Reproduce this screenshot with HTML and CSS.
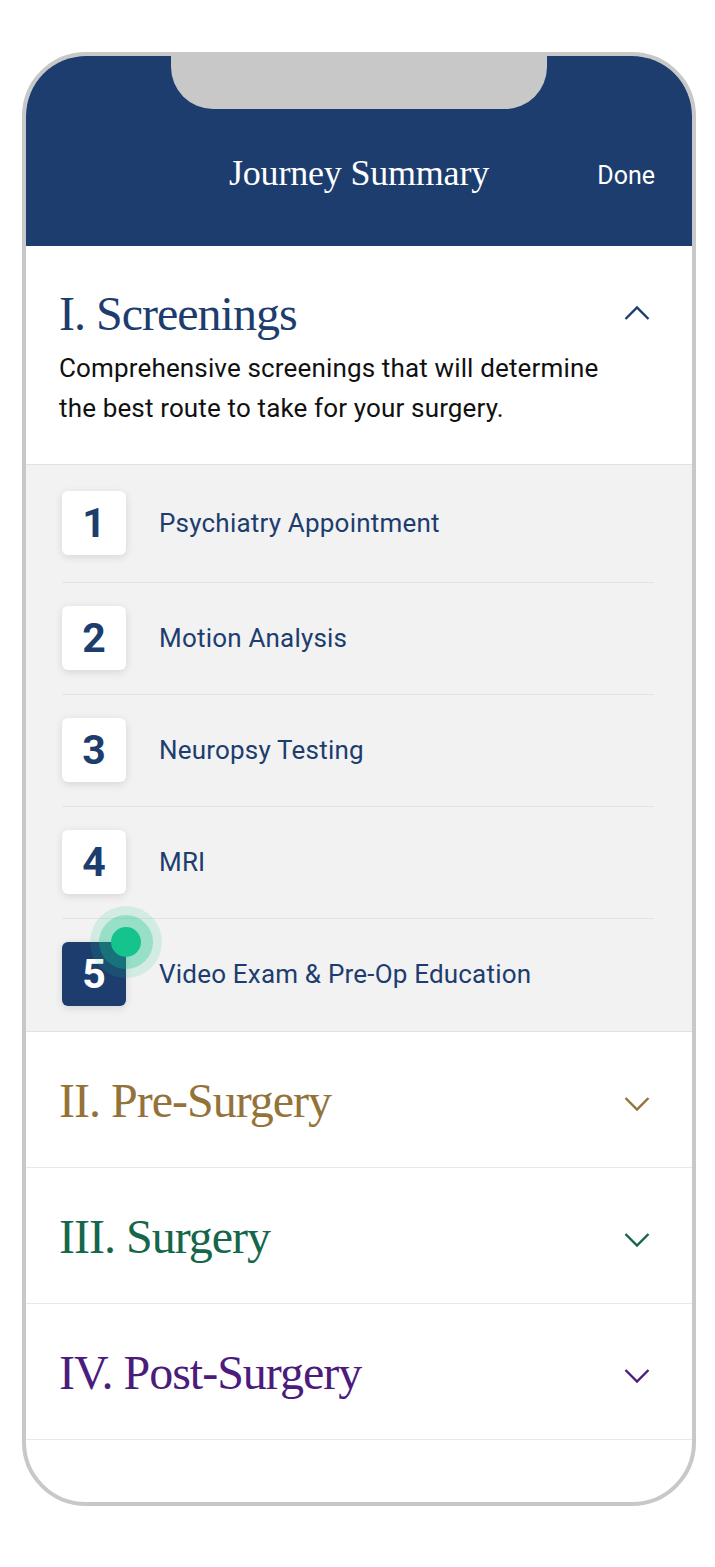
FILE: index.html
```html
<!DOCTYPE html>
<html lang="en">
<head>
<meta charset="utf-8">
<title>Journey Summary</title>
<link rel="stylesheet" href="styles.css">
</head>
<body>
<div class="phone">
  <div class="notch"></div>
  <header class="topbar">
    <span></span>
    <h1 class="topbar-title">Journey Summary</h1>
    <span class="topbar-done">Done</span>
  </header>

  <section class="stage stage-open">
    <div class="stage-head">
      <h2 class="stage-title navy">I. Screenings</h2>
      <svg class="chev chev-up" width="26" height="16" viewBox="0 0 26 16"><polyline points="1.5,14 13,2.5 24.5,14" fill="none" stroke="#1d3d6f" stroke-width="2.4"/></svg>
    </div>
    <p class="stage-desc">Comprehensive screenings that will determine the best route to take for your surgery.</p>
  </section>

  <ul class="steps">
    <li class="step"><span class="step-num">1</span><span class="step-name">Psychiatry Appointment</span></li>
    <li class="step"><span class="step-num">2</span><span class="step-name">Motion Analysis</span></li>
    <li class="step"><span class="step-num">3</span><span class="step-name">Neuropsy Testing</span></li>
    <li class="step"><span class="step-num">4</span><span class="step-name">MRI</span></li>
    <li class="step"><span class="step-num step-num-active">5<span class="pulse"><span class="pulse-mid"></span><span class="pulse-dot"></span></span></span><span class="step-name">Video Exam &amp; Pre-Op Education</span></li>
  </ul>

  <section class="stage">
    <div class="stage-head">
      <h2 class="stage-title gold">II. Pre-Surgery</h2>
      <svg class="chev chev-down" width="26" height="16" viewBox="0 0 26 16"><polyline points="1.5,2 13,13.5 24.5,2" fill="none" stroke="#94733a" stroke-width="2.4"/></svg>
    </div>
  </section>
  <section class="stage">
    <div class="stage-head">
      <h2 class="stage-title green">III. Surgery</h2>
      <svg class="chev chev-down" width="26" height="16" viewBox="0 0 26 16"><polyline points="1.5,2 13,13.5 24.5,2" fill="none" stroke="#15664a" stroke-width="2.4"/></svg>
    </div>
  </section>
  <section class="stage">
    <div class="stage-head">
      <h2 class="stage-title purple">IV. Post-Surgery</h2>
      <svg class="chev chev-down" width="26" height="16" viewBox="0 0 26 16"><polyline points="1.5,2 13,13.5 24.5,2" fill="none" stroke="#4b1c7c" stroke-width="2.4"/></svg>
    </div>
  </section>
</div>
</body>
</html>
```

FILE: styles.css
```css
* { box-sizing: border-box; }
html, body { margin: 0; padding: 0; background: #ffffff; }
body { font-family: Roboto, "Liberation Sans", sans-serif; }

.phone {
  position: relative;
  margin: 52px 0 0 22px;
  width: 674px;
  height: 1454px;
  border: 4px solid #c8c8c8;
  border-radius: 64px;
  overflow: hidden;
  background: #ffffff;
}

.notch {
  position: absolute;
  top: 0;
  left: 145px;
  width: 376px;
  height: 53px;
  background: #c8c8c8;
  border-radius: 0 0 42px 42px;
}

.topbar {
  height: 190px;
  background: #1d3d6f;
  display: grid;
  grid-template-columns: 1fr auto 1fr;
  align-items: start;
  padding: 95px 37px 0 37px;
}
.topbar-title {
  margin: 0;
  font-family: "Liberation Serif", serif;
  font-weight: 400;
  font-size: 36px;
  line-height: 44px;
  color: #ffffff;
  letter-spacing: -0.2px;
}
.topbar-done {
  justify-self: end;
  font-size: 25px;
  line-height: 44px;
  color: #ffffff;
  margin-top: 3px;
}

.stage {
  padding: 41px 42px 38px 33px;
  border-bottom: 1px solid #e8e8e8;
}
.stage-open { padding-top: 40px; padding-bottom: 36px; border-bottom: 1px solid #e2e2e2; }
.stage-head {
  display: flex;
  align-items: center;
  justify-content: space-between;
}
.stage-title {
  margin: 0;
  font-family: "Liberation Serif", serif;
  font-weight: 400;
  font-size: 48px;
  line-height: 56px;
  letter-spacing: -1px;
}
.navy { color: #1d3d6f; }
.gold { color: #94733a; }
.green { color: #15664a; }
.purple { color: #4b1c7c; }

.chev { display: block; }
.chev-up { margin-top: -3px; }
.chev-down { margin-top: 6px; }

.stage-desc {
  margin: 6px 0 0 0;
  max-width: 560px;
  font-size: 26px;
  line-height: 40px;
  letter-spacing: 0.15px;
  color: #111111;
}

.steps {
  list-style: none;
  margin: 0;
  padding: 3px 38px 0 36px;
  background: #f2f2f2;
  border-bottom: 1px solid #e2e2e2;
}
.step {
  display: flex;
  align-items: center;
  padding: 23px 0 24px 0;
  border-bottom: 1px solid #e2e2e2;
}
.step:first-child { padding-bottom: 27px; }
.step:last-child { border-bottom: none; padding-bottom: 25px; }

.step-num {
  position: relative;
  flex: 0 0 64px;
  width: 64px;
  height: 64px;
  border-radius: 6px;
  background: #ffffff;
  box-shadow: 0 2px 8px rgba(0, 0, 0, 0.12);
  display: flex;
  align-items: center;
  justify-content: center;
  font-weight: 700;
  font-size: 41px;
  color: #1d3d6f;
}
.step-num-active {
  background: #1d3d6f;
  color: #ffffff;
}
.step-name {
  margin-left: 33px;
  font-size: 26px;
  letter-spacing: 0.2px;
  color: #1d3d6f;
}

.pulse {
  position: absolute;
  top: -36px;
  right: -36px;
  width: 72px;
  height: 72px;
  border-radius: 50%;
  background: rgba(20, 195, 140, 0.14);
  display: flex;
  align-items: center;
  justify-content: center;
}
.pulse-mid {
  position: absolute;
  width: 54px;
  height: 54px;
  border-radius: 50%;
  background: rgba(20, 195, 140, 0.3);
}
.pulse-dot {
  position: relative;
  width: 30px;
  height: 30px;
  border-radius: 50%;
  background: #14c48c;
}
```
